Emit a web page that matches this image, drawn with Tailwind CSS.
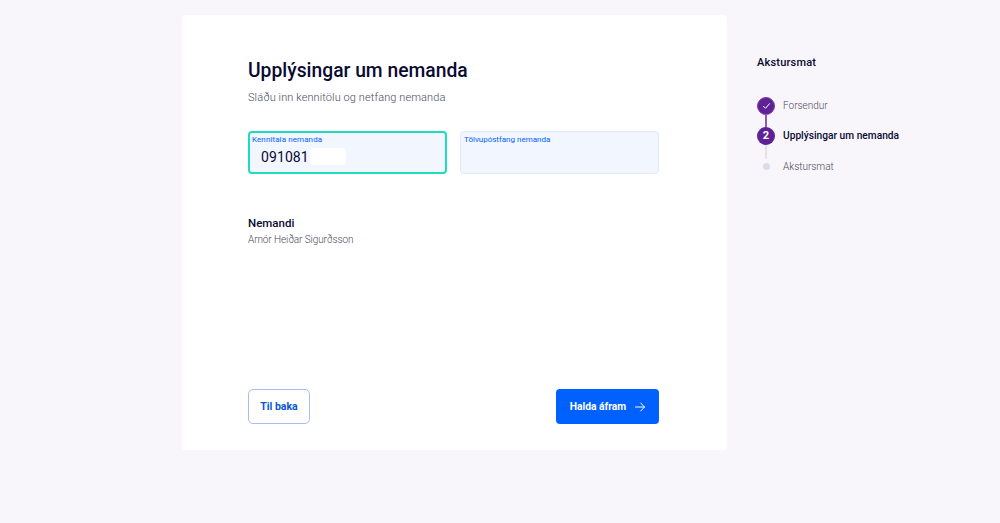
<!DOCTYPE html>
<html lang="is">
<head>
    <meta charset="UTF-8">
    <meta name="viewport" content="width=device-width, initial-scale=1.0">
    <title>Akstursmat</title>
    <script src="https://cdn.jsdelivr.net/npm/@tailwindcss/browser@4"></script>
</head>
<body class="bg-[#f8f6fb] h-[523px] overflow-hidden font-['Roboto',sans-serif] text-[#0a0a32]">
    <div class="flex pt-[15px] pl-[182px]">
        <!-- main card -->
        <main class="w-[545px] h-[435px] bg-white rounded-[4px] pl-[66px] pr-[68px] flex flex-col">
            <h1 class="mt-[43px] text-[19.3px] leading-[26px] font-medium">Upplýsingar um nemanda</h1>
            <p class="mt-[6px] text-[11px] leading-[16px] font-light text-[#4a4a60] tracking-[0.1px]">Sláðu inn kennitölu og netfang nemanda</p>

            <div class="mt-[25px] flex gap-[13px]">
                <div class="relative w-[199px] h-[43px] rounded-[4px] border-2 border-[#1fdcc0] bg-[#f2f7ff] pl-[3px] pt-[1px]">
                    <div class="text-[8px] leading-[11px] text-[#0061ff] -ml-[1px] tracking-[0.1px]">Kennitala nemanda</div>
                    <div class="mt-[2px] pl-[8px] text-[14px] leading-[20px] tracking-[0.1px]">091081</div>
                    <div class="absolute left-[60px] top-[15px] w-[36px] h-[17px] rounded-[3px] bg-white"></div>
                </div>
                <div class="w-[199px] h-[43px] rounded-[4px] border border-[#e0e9fb] bg-[#f2f7ff] pl-[3px] pt-[2px]">
                    <div class="text-[8px] leading-[11px] text-[#0061ff]">Tölvupóstfang nemanda</div>
                </div>
            </div>

            <div class="mt-[41px] text-[11.5px] leading-[16px] font-medium">Nemandi</div>
            <div class="mt-[1px] text-[10px] leading-[16px] font-light text-[#4a4a60] tracking-[-0.1px]">Arnór Heiðar Sigurðsson</div>

            <div class="mt-auto mb-[26px] flex justify-between items-center">
                <button class="w-[62px] h-[35px] rounded-[5px] border border-[#a9bdf0] bg-white text-[10.5px] font-bold text-[#0a55d8]">Til baka</button>
                <button class="w-[103px] h-[35px] rounded-[4px] bg-[#0061ff] text-white text-[10.3px] font-bold flex items-center justify-center gap-[9px]">
                    Halda áfram
                    <svg width="10" height="10" viewBox="0 0 10 10" fill="none" stroke="white" stroke-width="1" stroke-linecap="round" stroke-linejoin="round"><path d="M.5 5h9M5.7 1l3.8 4-3.8 4"/></svg>
                </button>
            </div>
        </main>

        <!-- steps -->
        <aside class="ml-[30px] w-[180px]">
            <div class="mt-[41px] text-[11px] leading-[14px] font-medium tracking-[0.2px]">Akstursmat</div>
            <ol class="mt-[20px]">
                <li class="flex items-center h-[31px] relative">
                    <div class="w-[18px] h-[18px] rounded-full bg-[#5f2196] border border-[#7b3db0] flex items-center justify-center">
                        <svg width="9" height="8" viewBox="0 0 9 8" fill="none" stroke="white" stroke-width="1" stroke-linecap="round" stroke-linejoin="round"><path d="M1.5 4.3l2 2L7.5 1.7"/></svg>
                    </div>
                    <span class="ml-[8px] text-[10px] font-light text-[#4a4a60]">Forsendur</span>
                    <div class="absolute left-[8px] top-[24px] w-[2px] h-[13px] bg-[#8a5fb0]"></div>
                </li>
                <li class="flex items-center h-[30px] relative">
                    <div class="w-[18px] h-[18px] rounded-full bg-[#5f2196] flex items-center justify-center text-white text-[11px] font-bold">2</div>
                    <span class="ml-[8px] text-[10.2px] font-medium">Upplýsingar um nemanda</span>
                    <div class="absolute left-[8px] top-[24px] w-[2px] h-[14px] bg-[#e3e1ee]"></div>
                </li>
                <li class="flex items-center h-[31px]">
                    <div class="w-[18px] flex justify-center"><div class="w-[7px] h-[7px] rounded-full bg-[#dcdbe8]"></div></div>
                    <span class="ml-[8px] text-[10px] font-light text-[#4a4a60]">Akstursmat</span>
                </li>
            </ol>
        </aside>
    </div>
</body>
</html>
